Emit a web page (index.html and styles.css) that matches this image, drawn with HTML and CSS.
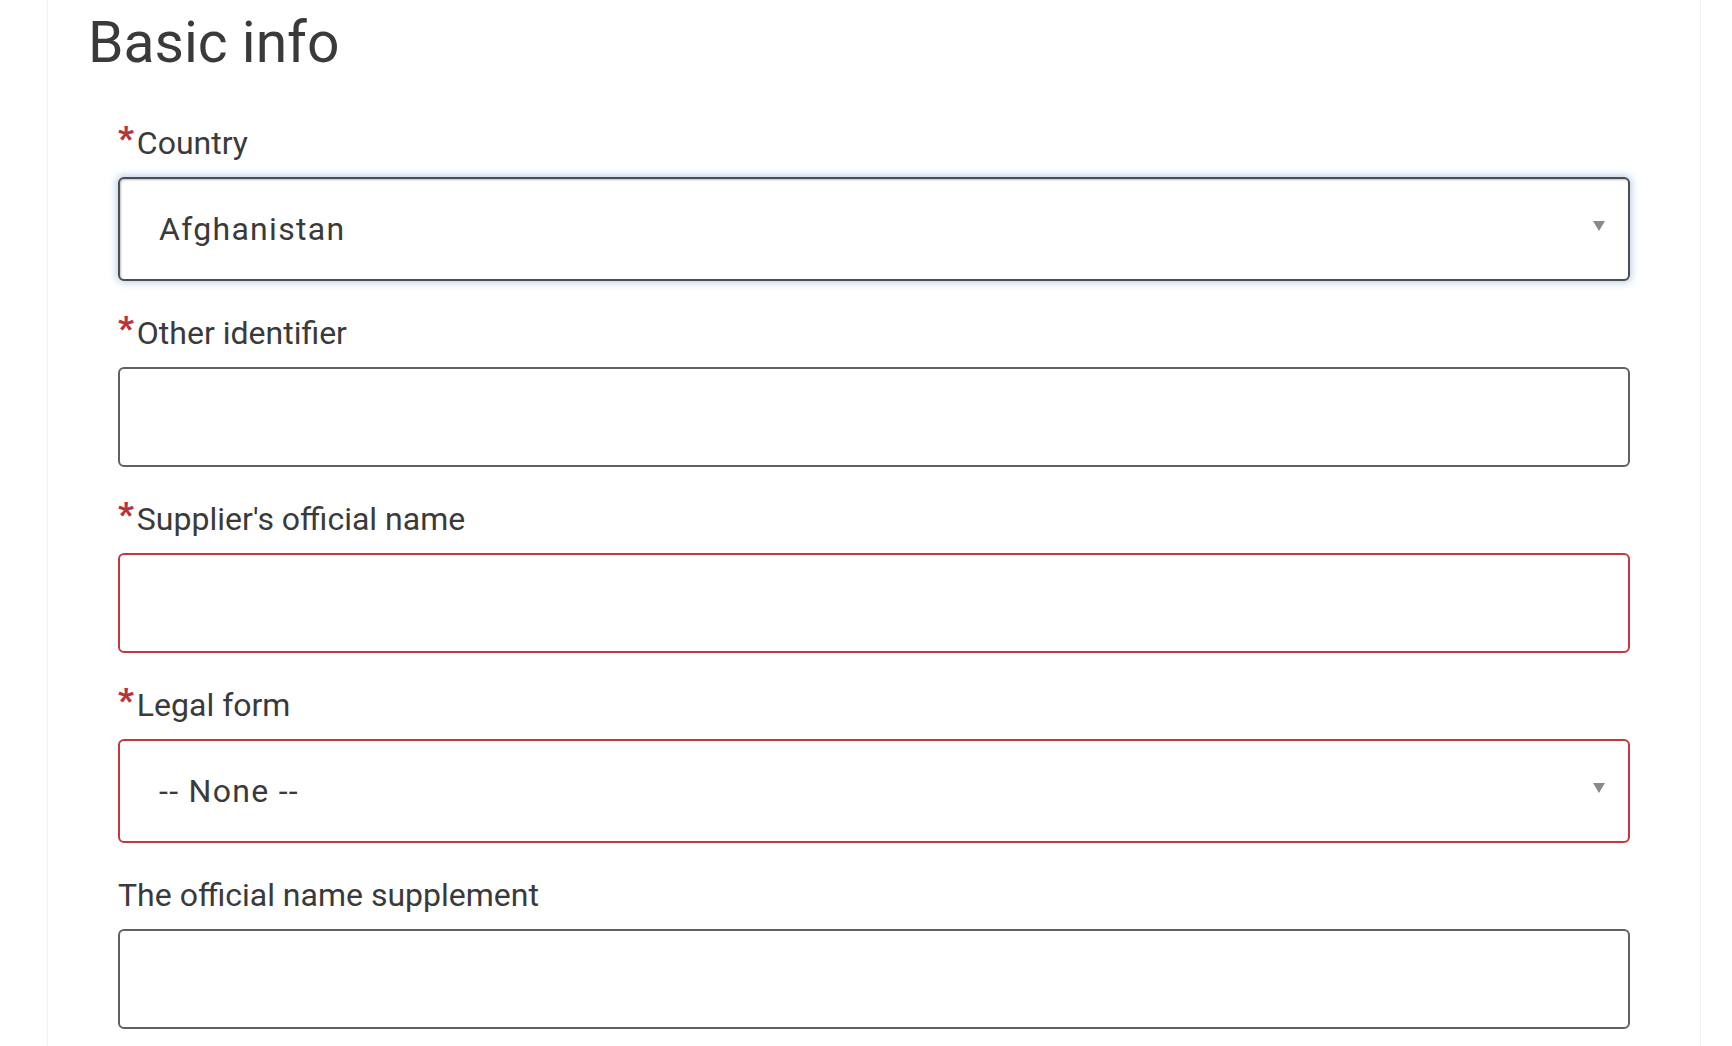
FILE: index.html
```html
<!DOCTYPE html>
<html lang="en">
<head>
  <meta charset="UTF-8" />
  <title>Basic info</title>
  <link rel="stylesheet" href="styles.css">
</head>
<body>

<div class="card">
  <h1>Basic info</h1>

  <form class="form">
    <div class="field">
      <label class="field-label" for="country"><span class="req">*</span>Country</label>
      <div class="select-wrap">
        <select id="country" class="control select focused">
          <option>Afghanistan</option>
        </select>
        <svg class="arrow" width="12" height="10" viewBox="0 0 12 10"><polygon points="0,0 12,0 6,10" fill="#8a8a8a"/></svg>
      </div>
    </div>

    <div class="field">
      <label class="field-label" for="other-id"><span class="req">*</span>Other identifier</label>
      <input type="text" id="other-id" class="control input">
    </div>

    <div class="field">
      <label class="field-label" for="official-name"><span class="req">*</span>Supplier's official name</label>
      <input type="text" id="official-name" class="control input invalid">
    </div>

    <div class="field">
      <label class="field-label" for="legal-form"><span class="req">*</span>Legal form</label>
      <div class="select-wrap">
        <select id="legal-form" class="control select invalid">
          <option>-- None --</option>
        </select>
        <svg class="arrow" width="12" height="10" viewBox="0 0 12 10"><polygon points="0,0 12,0 6,10" fill="#8a8a8a"/></svg>
      </div>
    </div>

    <div class="field">
      <label class="field-label" for="supplement">The official name supplement</label>
      <input type="text" id="supplement" class="control input">
    </div>
  </form>
</div>

</body>
</html>
```

FILE: styles.css
```css
body {
  font-family: Roboto, 'Liberation Sans', sans-serif;
  background-color: #ffffff;
  color: #3a3a3a;
  margin: 0;
  padding: 0;
}

.card {
  margin: 0 31px 0 47px;
  padding: 9px 0 40px;
  background: white;
  border-left: 1px solid #f2f2f2;
  border-right: 1px solid #f2f2f2;
}

.card h1 {
  margin: 0 0 46px 40px;
  font-size: 57px;
  line-height: 68px;
  font-weight: 400;
  color: #3a3a3a;
}

.form {
  padding: 0 70px;
}

.field {
  margin-bottom: 32px;
}

.field-label {
  display: block;
  height: 40px;
  font-size: 32px;
  line-height: 40px;
  margin-bottom: 14px;
  color: #3a3a3a;
}

.req {
  color: #b8343a;
  font-weight: 900;
  font-size: 34px;
  line-height: 0;
  vertical-align: 4px;
  margin-right: 3px;
}

.control {
  display: block;
  width: 100%;
  box-sizing: border-box;
  border: 2px solid #616161;
  border-radius: 6px;
  background: white;
  font-family: Roboto, 'Liberation Sans', sans-serif;
  color: #3a3a3a;
  outline: none;
}

.input {
  height: 100px;
}

.select-wrap {
  position: relative;
}

.select {
  height: 104px;
  appearance: none;
  -webkit-appearance: none;
  padding: 0 60px 0 39px;
  font-size: 32px;
  letter-spacing: 1.3px;
}

.select.focused {
  border-color: #4d4d4d;
  box-shadow: 0 0 7px 2px rgba(110, 155, 215, 0.45), inset 1px 1px 2px rgba(0, 0, 0, 0.25);
}

.invalid {
  border-color: #c0393e;
}

.arrow {
  position: absolute;
  right: 25px;
  top: 44px;
}
```
